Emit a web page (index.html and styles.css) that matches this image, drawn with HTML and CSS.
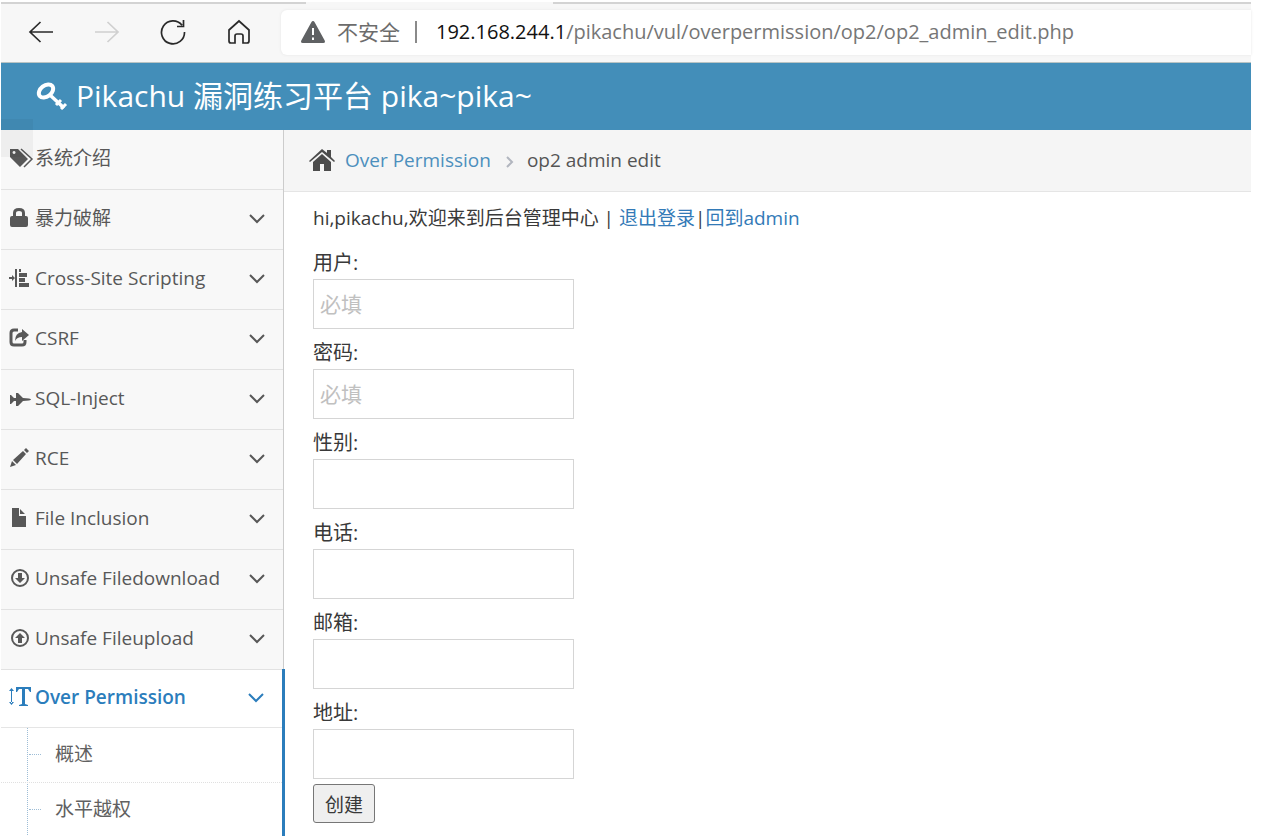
FILE: index.html
```html
<!DOCTYPE html>
<html lang="zh-CN">
<head>
    <meta charset="UTF-8">
    <meta name="viewport" content="width=device-width, initial-scale=1.0">
    <title>Pikachu 漏洞练习平台</title>
    <link rel="stylesheet" href="styles.css">
</head>
<body>
    <div class="toolbar">
        <div class="tab-edge"></div>
        <button class="tool" type="button" aria-label="Back">
            <svg width="26" height="24" viewBox="0 0 26 24"><path d="M25 12H2M12.500 2 2 12l10.500 10"/></svg>
        </button>
        <button class="tool" type="button" aria-label="Forward" disabled>
            <svg width="26" height="24" viewBox="0 0 26 24"><path d="M1 12h23M13.500 2 24 12 13.500 22"/></svg>
        </button>
        <button class="tool" type="button" aria-label="Reload">
            <svg width="26" height="26" viewBox="0 0 26 26"><path d="M24.500 13A11.500 11.500 0 1 1 22 6.200M23.500 1v6.500H17"/></svg>
        </button>
        <button class="tool" type="button" aria-label="Home">
            <svg width="26" height="26" viewBox="0 0 26 26"><path d="M3 11 13 2l10 9v11q0 2-2 2h-4v-7q0-2-2-2h-4q-2 0-2 2v7H5q-2 0-2-2z"/></svg>
        </button>
        <div class="address">
            <svg class="warning" width="24" height="22" viewBox="0 0 24 22"><path d="M12 0q1 0 1.500 1l10.200 18.500q1 2.500-1.500 2.500H1.800q-2.500 0-1.500-2.500L10.500 1Q11 0 12 0z" fill="#5f6163"/><path d="M12 7v7M12 16.500v2.500" stroke="#fff" stroke-width="2"/></svg>
            <span>不安全</span>
            <span class="divider"></span>
            <span class="url"><b>192.168.244.1</b>/pikachu/vul/overpermission/op2/op2_admin_edit.php</span>
        </div>
    </div>

    <header class="navbar">
        <a href="#" class="brand">
            <svg width="32" height="28" viewBox="0 0 32 28"><g fill="none" stroke="#fff"><ellipse cx="10" cy="9" rx="8" ry="5.500" transform="rotate(-38 10 9)" stroke-width="4"/><path d="m14 13 14 13" stroke-width="3.500"/><path d="m20 23 5-5M25 27l5-5" stroke-width="3"/></g></svg>
            Pikachu 漏洞练习平台 pika~pika~
        </a>
    </header>

    <div class="main-container">
        <nav class="sidebar">
            <ul class="nav-list">
                <li>
                    <a href="#">
                        <svg class="menu-icon" viewBox="0 0 24 20"><path d="M1 1h8l10 10-8 8L1 9zM5 3a1.500 1.500 0 1 0 .1 0z" fill-rule="evenodd"/><path d="m12 1 11 10-8 8" fill="none" stroke="currentColor" stroke-width="1.500"/></svg>
                        <span>系统介绍</span>
                    </a>
                </li>
                <li>
                    <a href="#">
                        <svg class="menu-icon" viewBox="0 0 24 20"><path d="M4 8V5q0-5 6-5t6 5v3h1q2 0 2 2v7q0 2-2 2H3q-2 0-2-2v-7q0-2 2-2zM7 8h6V5q0-2-3-2T7 5z" fill-rule="evenodd"/></svg>
                        <span>暴力破解</span>
                        <svg class="arrow" viewBox="0 0 16 10"><path d="m1 1 7 7 7-7"/></svg>
                    </a>
                </li>
                <li>
                    <a href="#">
                        <svg class="menu-icon" viewBox="0 0 24 20"><path d="M0 9h5v2H0zM3 7l3 3-3 3zM6 1h2v18H6zM10 1h2v3h-2zM10 5h8v4h-8zM10 10h6v4h-6zM10 15h10v4H10z"/></svg>
                        <span>Cross-Site Scripting</span>
                        <svg class="arrow" viewBox="0 0 16 10"><path d="m1 1 7 7 7-7"/></svg>
                    </a>
                </li>
                <li>
                    <a href="#">
                        <svg class="menu-icon" viewBox="0 0 24 20"><path d="M9 2H5Q2 2 2 5v9q0 3 3 3h8q3 0 3-3v-2" fill="none" stroke="currentColor" stroke-width="3"/><path d="m13 1 7 6-7 6V9q-5 0-7 4 0-8 7-9z"/></svg>
                        <span>CSRF</span>
                        <svg class="arrow" viewBox="0 0 16 10"><path d="m1 1 7 7 7-7"/></svg>
                    </a>
                </li>
                <li>
                    <a href="#">
                        <svg class="menu-icon" viewBox="0 0 24 20"><path d="M1 7h1l3 3h2V5h2l5 5 6 .5q2 .5 2 1t-2 1l-6 .5-5 5H7v-5H5l-3 3H1z"/></svg>
                        <span>SQL-Inject</span>
                        <svg class="arrow" viewBox="0 0 16 10"><path d="m1 1 7 7 7-7"/></svg>
                    </a>
                </li>
                <li>
                    <a href="#">
                        <svg class="menu-icon" viewBox="0 0 24 20"><path d="m1 19 2-6 4 4zM4 12 14 3l3 3-9 10zM15 2l2-2 3 3-2 2z"/></svg>
                        <span>RCE</span>
                        <svg class="arrow" viewBox="0 0 16 10"><path d="m1 1 7 7 7-7"/></svg>
                    </a>
                </li>
                <li>
                    <a href="#">
                        <svg class="menu-icon" viewBox="0 0 24 20"><path d="M3 0h7v8h7v11H3zM11 1l5 5h-5z"/></svg>
                        <span>File Inclusion</span>
                        <svg class="arrow" viewBox="0 0 16 10"><path d="m1 1 7 7 7-7"/></svg>
                    </a>
                </li>
                <li>
                    <a href="#">
                        <svg class="menu-icon" viewBox="0 0 24 20"><circle cx="11" cy="10" r="8" fill="none" stroke="currentColor" stroke-width="2"/><path d="M9 5h4v5h3l-5 5-5-5h3z"/></svg>
                        <span>Unsafe Filedownload</span>
                        <svg class="arrow" viewBox="0 0 16 10"><path d="m1 1 7 7 7-7"/></svg>
                    </a>
                </li>
                <li>
                    <a href="#">
                        <svg class="menu-icon" viewBox="0 0 24 20"><circle cx="11" cy="10" r="8" fill="none" stroke="currentColor" stroke-width="2"/><path d="M9 15h4v-5h3l-5-5-5 5h3z"/></svg>
                        <span>Unsafe Fileupload</span>
                        <svg class="arrow" viewBox="0 0 16 10"><path d="m1 1 7 7 7-7"/></svg>
                    </a>
                </li>
                <li class="active">
                    <a href="#">
                        <svg class="menu-icon" viewBox="0 0 24 20"><path d="M2 3h1v13H2zM0 4l2.500-3L5 4zM0 15l2.500 3L5 15zM7 0h15v5h-1l-2-3h-3v15l3 1v1h-9v-1l3-1V2h-3L8 5H7z"/></svg>
                        <span>Over Permission</span>
                        <svg class="arrow" viewBox="0 0 16 10"><path d="m1 1 7 7 7-7"/></svg>
                    </a>
                    <ul class="submenu">
                        <li><a href="#">概述</a></li>
                        <li><a href="#">水平越权</a></li>
                    </ul>
                </li>
            </ul>
        </nav>

        <main class="main-content">
            <div class="breadcrumbs">
                <svg width="26" height="22" viewBox="0 0 26 22"><path d="M13 0 18 4V1h4v7l4 4-1 1L13 3 1 13l-1-1zM13 5l9 8v9h-7v-7h-4v7H4v-9z"/></svg>
                <a href="#">Over Permission</a>
                <svg class="separator" width="8" height="12" viewBox="0 0 8 12"><path d="m1 1 5 5-5 5"/></svg>
                <span>op2 admin edit</span>
            </div>

            <div class="page-content">
                <p class="greeting">hi,pikachu,欢迎来到后台管理中心 | <a href="#">退出登录</a>|<a href="#">回到admin</a></p>
                <form method="post">
                    <label for="username">用户:</label>
                    <input type="text" id="username" name="username" placeholder="必填">
                    <label for="password">密码:</label>
                    <input type="text" id="password" name="password" placeholder="必填">
                    <label for="sex">性别:</label>
                    <input type="text" id="sex" name="sex">
                    <label for="phonenum">电话:</label>
                    <input type="text" id="phonenum" name="phonenum">
                    <label for="email">邮箱:</label>
                    <input type="text" id="email" name="email">
                    <label for="address">地址:</label>
                    <input type="text" id="address" name="address">
                    <button type="submit">创建</button>
                </form>
            </div>
        </main>
    </div>
</body>
</html>
```
FILE: styles.css
```css
* {
    margin: 0;
    padding: 0;
    box-sizing: border-box;
    font-family: 'Open Sans', 'Noto Sans CJK SC', sans-serif;
}

body {
    min-height: 100vh;
    display: flex;
    flex-direction: column;
    padding: 2px 12px 0 1px;
    background: #fff;
    color: #393939;
    font-size: 19px;
    line-height: 28px;
    overflow: hidden;
}

a {
    color: #337ab7;
    text-decoration: none;
}

/* Browser bar */
.toolbar {
    position: relative;
    height: 61px;
    display: flex;
    align-items: center;
    padding-left: 7px;
    background: #f7f7f7;
    border-bottom: 1px solid #b9c4c4;
}

.tab-edge {
    position: absolute;
    top: 0;
    left: 0;
    right: 0;
    height: 2px;
    background: linear-gradient(to right, #d3d3d3 305px, #f7f7f7 305px, #f7f7f7 552px, #d3d3d3 552px);
}

.tool {
    width: 66px;
    height: 40px;
    display: flex;
    align-items: center;
    justify-content: center;
    border: none;
    background: none;
}

.tool svg {
    fill: none;
    stroke: #2a2a2a;
    stroke-width: 1.7;
}

.tool:disabled svg {
    stroke: #d0d0d0;
}

.address {
    flex: 1;
    height: 45px;
    display: flex;
    align-items: center;
    margin-left: 9px;
    padding-left: 20px;
    background: #fff;
    border-radius: 6px 0 0 6px;
    box-shadow: 0 0 3px #e4e4e4;
    color: #6c6c6c;
    font-size: 21px;
    white-space: nowrap;
}

.warning {
    margin-right: 12px;
}

.divider {
    width: 2px;
    height: 22px;
    margin: 0 19px 0 15px;
    background: #8a8a8a;
}

.url {
    color: #767676;
    font-family: 'Open Sans', sans-serif;
    font-size: 20px;
}

.url b {
    color: #111;
    font-weight: 400;
}

/* Header */
.navbar {
    height: 67px;
    display: flex;
    align-items: center;
    padding: 0 0 2px 35px;
    background: #438eb9;
}

.brand {
    display: flex;
    align-items: center;
    gap: 8px;
    color: #fff;
    font-size: 30px;
    line-height: 40px;
}

/* Sidebar */
.main-container {
    flex: 1;
    display: flex;
}

.sidebar {
    position: relative;
    width: 283px;
    flex-shrink: 0;
    background: #f2f2f2;
    border-right: 1px solid #ccc;
}

/* Faded menu toggle over the corner */
.sidebar::before {
    content: "";
    position: absolute;
    top: -11px;
    left: 0;
    width: 32px;
    height: 38px;
    background: rgba(0, 0, 0, 0.04);
}

.nav-list,
.submenu {
    list-style: none;
}

.nav-list > li > a {
    height: 60px;
    display: flex;
    align-items: center;
    padding: 0 18px 4px 8px;
    border-top: 1px solid #e2e2e2;
    background: #f8f8f8;
    color: #585858;
    white-space: nowrap;
}

.nav-list > li:first-child > a {
    height: 59px;
    border-top: none;
}

.menu-icon {
    width: 24px;
    height: 20px;
    margin-right: 2px;
    fill: currentColor;
    overflow: visible;
}

.arrow {
    width: 16px;
    height: 10px;
    margin: 3px 0 0 auto;
    fill: none;
    stroke: currentColor;
    stroke-width: 2;
}

.nav-list > .active {
    margin-right: -2px;
    border-right: 3px solid #2b7dbc;
    background: #fff;
}

.nav-list > .active > a {
    height: 58px;
    background: #fff;
    color: #2b7dbc;
    font-weight: 600;
}

.submenu {
    position: relative;
    height: 110px;
    border-top: 1px solid #e5e5e5;
}

.submenu::before {
    content: "";
    position: absolute;
    top: 0;
    bottom: 0;
    left: 26px;
    border-left: 1px dotted #9dbdd6;
}

.submenu li {
    position: relative;
}

.submenu li::before {
    content: "";
    position: absolute;
    top: 26px;
    left: 28px;
    width: 12px;
    border-top: 1px dotted #9dbdd6;
}

.submenu li + li {
    border-top: 1px dotted #e0e0e0;
}

.submenu a {
    display: block;
    padding: 12px 0 14px 54px;
    color: #616161;
}

/* Content */
.main-content {
    flex: 1;
}

.breadcrumbs {
    height: 62px;
    display: flex;
    align-items: center;
    padding: 0 0 2px 25px;
    background: #f5f5f5;
    border-bottom: 1px solid #e5e5e5;
    color: #555;
    fill: #4c4c4c;
}

.breadcrumbs a {
    margin-left: 10px;
    color: #4c8fbd;
}

.breadcrumbs .separator {
    margin: 4px 13px 0 15px;
    fill: none;
    stroke: #b2b6bf;
    stroke-width: 2;
}

.page-content {
    padding: 12px 29px 0;
}

.greeting {
    margin-bottom: 17px;
}

form label {
    display: block;
    padding-bottom: 2px;
    font-size: 20px;
}

form input {
    display: block;
    width: 261px;
    height: 50px;
    margin-bottom: 10px;
    padding: 0 6px;
    border: 1px solid #d5d5d5;
    font-size: 21px;
}

form input::placeholder {
    color: #c0c0c0;
}

form button {
    width: 62px;
    height: 39px;
    border: 1px solid #767676;
    border-radius: 3px;
    background: #efefef;
    color: #393939;
    font-size: 19px;
}

form input:last-of-type {
    margin-bottom: 5px;
}
```
